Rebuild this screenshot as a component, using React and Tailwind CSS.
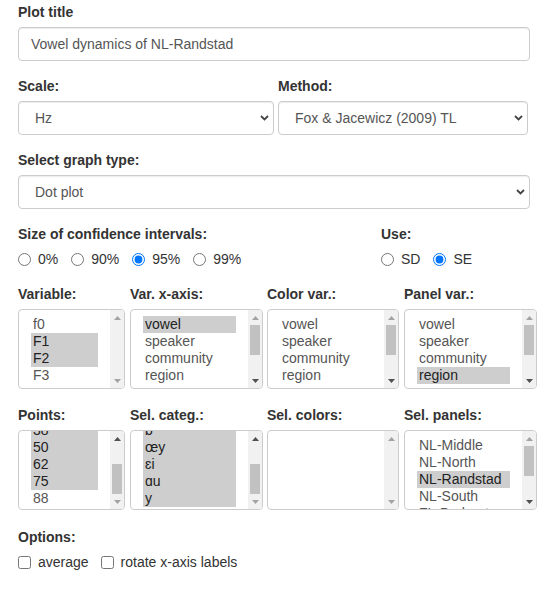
import React from "react";

const LABEL = "block text-[14px] font-bold leading-[20px] text-[#333] mb-[5px]";

function Chevron() {
  return (
    <svg
      className="pointer-events-none absolute right-[5px] top-1/2 -translate-y-1/2"
      width="9"
      height="6"
      viewBox="0 0 9 6"
    >
      <path d="M1 1l3.5 3.5L8 1" fill="none" stroke="#444" strokeWidth="1.8" />
    </svg>
  );
}

function Select({ value, width }) {
  return (
    <div className={`relative ${width}`}>
      <select
        defaultValue={value}
        className="h-[34px] w-full appearance-none rounded-[4px] border border-[#ccc] bg-white pl-[16px] pr-[24px] text-[14px] text-[#555] shadow-[inset_0_1px_1px_rgba(0,0,0,0.075)]"
      >
        <option>{value}</option>
      </select>
      <Chevron />
    </div>
  );
}

function Arrow({ up, on }) {
  return (
    <div className="flex h-[15px] items-center justify-center">
      <svg width="7" height="4" viewBox="0 0 7 4">
        <path
          d={up ? "M0 4L3.5 0L7 4Z" : "M0 0L7 0L3.5 4Z"}
          fill={on ? "#505050" : "#a3a3a3"}
        />
      </svg>
    </div>
  );
}

// thumb: null (not scrollable), "top" or "bottom"
function Scrollbar({ thumb }) {
  return (
    <div className="flex w-[14px] shrink-0 flex-col bg-[#f1f1f1]">
      <Arrow up on={thumb === "bottom"} />
      <div
        className={`flex flex-1 flex-col px-[2px] ${
          thumb === "bottom" ? "justify-end" : "justify-start"
        }`}
      >
        {thumb && <div className="h-[30px] bg-[#c1c1c1]" />}
      </div>
      <Arrow on={thumb === "top"} />
    </div>
  );
}

function ListBox({ width, items = [], selected = [], thumb = null, offset = "" }) {
  return (
    <div
      className={`flex h-[80px] overflow-hidden rounded-[4px] border border-[#ccc] bg-white ${width}`}
    >
      <div className="min-w-0 flex-1 overflow-hidden px-[12px] pt-[6px]">
        <ul className={offset}>
          {items.map((it) => (
            <li
              key={it}
              className={`whitespace-nowrap px-[2px] text-[14px] leading-[17px] ${
                selected.includes(it) ? "bg-[#cecece] text-[#222]" : "text-[#555]"
              }`}
            >
              {it}
            </li>
          ))}
        </ul>
      </div>
      <Scrollbar thumb={thumb} />
    </div>
  );
}

function Radio({ label, checked, name }) {
  return (
    <label className="flex items-center gap-[7px] text-[14px] leading-[20px] text-[#333]">
      <input type="radio" name={name} defaultChecked={checked} className="h-[13px] w-[13px]" />
      {label}
    </label>
  );
}

function Check({ label }) {
  return (
    <label className="flex items-center gap-[7px] text-[14px] leading-[20px] text-[#333]">
      <input type="checkbox" className="h-[13px] w-[13px]" />
      {label}
    </label>
  );
}

const vars = ["vowel", "speaker", "community", "region", "sex", "age", "time"];

export default function App() {
  return (
    <div className="min-h-[591px] bg-white px-[18px] pt-[2px] font-['Liberation_Sans',Arial,'DejaVu_Sans',sans-serif]">
      {/* Plot title */}
      <div className="mb-[15px]">
        <label className={LABEL}>Plot title</label>
        <input
          type="text"
          defaultValue="Vowel dynamics of NL-Randstad"
          className="h-[34px] w-[512px] rounded-[4px] border border-[#ccc] px-[12px] text-[14px] text-[#555] shadow-[inset_0_1px_1px_rgba(0,0,0,0.075)]"
        />
      </div>

      {/* Scale / Method */}
      <div className="mb-[15px] flex gap-[4px]">
        <div className="w-[256px]">
          <label className={LABEL}>Scale:</label>
          <Select value="Hz" width="w-[256px]" />
        </div>
        <div className="w-[250px]">
          <label className={LABEL}>Method:</label>
          <Select value="Fox & Jacewicz (2009) TL" width="w-[250px]" />
        </div>
      </div>

      {/* Graph type */}
      <div className="mb-[15px]">
        <label className={LABEL}>Select graph type:</label>
        <Select value="Dot plot" width="w-[512px]" />
      </div>

      {/* Confidence / Use */}
      <div className="mb-[15px] flex">
        <div className="w-[363px]">
          <label className={LABEL}>Size of confidence intervals:</label>
          <div className="flex gap-[13px]">
            <Radio name="ci" label="0%" />
            <Radio name="ci" label="90%" />
            <Radio name="ci" label="95%" checked />
            <Radio name="ci" label="99%" />
          </div>
        </div>
        <div>
          <label className={LABEL}>Use:</label>
          <div className="flex gap-[13px]">
            <Radio name="use" label="SD" />
            <Radio name="use" label="SE" checked />
          </div>
        </div>
      </div>

      {/* Variables */}
      <div className="mb-[16px] grid grid-cols-[112px_137px_137px_133px]">
        <div>
          <label className={LABEL}>Variable:</label>
          <ListBox width="w-[107px]" items={["f0", "F1", "F2", "F3"]} selected={["F1", "F2"]} />
        </div>
        <div>
          <label className={LABEL}>Var. x-axis:</label>
          <ListBox width="w-[133px]" items={vars} selected={["vowel"]} thumb="top" />
        </div>
        <div>
          <label className={LABEL}>Color var.:</label>
          <ListBox width="w-[132px]" items={vars} thumb="top" />
        </div>
        <div>
          <label className={LABEL}>Panel var.:</label>
          <ListBox width="w-[133px]" items={vars} selected={["region"]} thumb="top" />
        </div>
      </div>

      {/* Selections */}
      <div className="mb-[17px] grid grid-cols-[112px_137px_137px_133px]">
        <div>
          <label className={LABEL}>Points:</label>
          <ListBox
            width="w-[107px]"
            items={["12", "25", "38", "50", "62", "75", "88"]}
            selected={["38", "50", "62", "75"]}
            thumb="bottom"
            offset="-mt-[49px]"
          />
        </div>
        <div>
          <label className={LABEL}>Sel. categ.:</label>
          <ListBox
            width="w-[133px]"
            items={["ʏ", "ɔ", "ɒ", "œy", "ɛi", "ɑu", "y"]}
            selected={["ʏ", "ɔ", "ɒ", "œy", "ɛi", "ɑu", "y"]}
            thumb="bottom"
            offset="-mt-[49px]"
          />
        </div>
        <div>
          <label className={LABEL}>Sel. colors:</label>
          <ListBox width="w-[132px]" />
        </div>
        <div>
          <label className={LABEL}>Sel. panels:</label>
          <ListBox
            width="w-[133px]"
            items={["NL-Middle", "NL-North", "NL-Randstad", "NL-South", "FL-Brabant", "FL-Limburg", "FL-West"]}
            selected={["NL-Randstad"]}
            thumb="top"
          />
        </div>
      </div>

      {/* Options */}
      <div>
        <label className={LABEL}>Options:</label>
        <div className="flex gap-[12px]">
          <Check label="average" />
          <Check label="rotate x-axis labels" />
        </div>
      </div>
    </div>
  );
}
